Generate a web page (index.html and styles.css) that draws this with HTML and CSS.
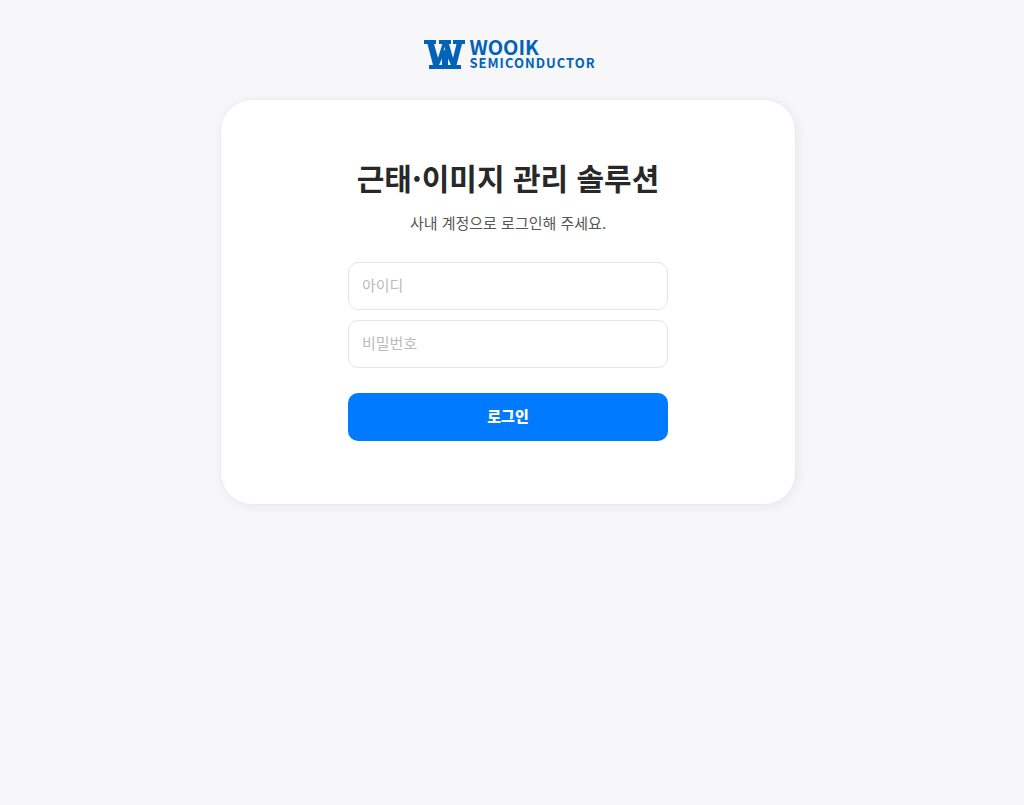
FILE: index.html
```html
<!DOCTYPE html>
<html lang="ko">
	<head>
		<meta charset="utf-8">
		<meta name="viewport" content="width=device-width, initial-scale=1">
		<title>근태·이미지 관리 솔루션</title>
		<link rel="stylesheet" href="styles.css">
	</head>

	<body>

		<header class="logo">
			<svg class="logo-mark" viewBox="0 0 41 29" aria-hidden="true">
				<path d="M0 0H12V4H10L14 18L18.300 4H15V0H27V4H25L29 18L32.500 4H29V0H41V4H38L32.500 25H37V29H5V25H9L3.500 4H0Z"/>
				<path class="logo-cut" d="M20.500 7L21.500 11L20.500 9.500L19.500 11ZM15 25L18 18.500V25ZM24 18.500L27 25H24Z"/>
			</svg>
			<div class="logo-text">
				<span class="logo-name">WOOIK</span>
				<span class="logo-sub">SEMICONDUCTOR</span>
			</div>
		</header>

		<main class="card">
			<h1>근태·이미지 관리 솔루션</h1>
			<p>사내 계정으로 로그인해 주세요.</p>

			<form class="login">
				<input type="text" name="id" placeholder="아이디" aria-label="아이디">
				<input type="password" name="password" placeholder="비밀번호" aria-label="비밀번호">
				<button type="submit">로그인</button>
			</form>
		</main>

	</body>
</html>
```

FILE: styles.css
```css
*{
	box-sizing: border-box;
}
body{
	margin: 0;
	padding: 39px 24px 40px 16px;
	background-color: #f7f7fa;
	color: #282828;
	font-family: "Noto Sans CJK KR", sans-serif;
}
.logo{
	display: flex;
	justify-content: center;
	gap: 4px;
	height: 30px;
	margin-bottom: 30px;
	padding-left: 4px;
	color: #0062b8;
}
.logo-mark{
	width: 41px;
	height: 29px;
	margin-top: 1px;
	fill: currentColor;
}
.logo-mark .logo-cut{
	fill: #f7f7fa;
}
.logo-text{
	display: flex;
	flex-direction: column;
	font-weight: 700;
}
.logo-name{
	font-size: 20px;
	line-height: 16px;
}
.logo-sub{
	font-size: 13px;
	letter-spacing: 1px;
	line-height: 16px;
}
.card{
	max-width: 576px;
	margin: 0 auto;
	padding: 54px 24px 63px;
	border: 1px solid #ebebef;
	border-radius: 32px;
	background-color: #fff;
	box-shadow: 2px 2px 12px rgba(0, 0, 40, 0.06);
	text-align: center;
}
.card h1{
	margin: 0;
	font-size: 30px;
	font-weight: 700;
	line-height: 46px;
}
.card p{
	margin: 11px 0 27px;
	color: #555;
	font-size: 15px;
	line-height: 24px;
}
.login{
	display: flex;
	flex-direction: column;
	gap: 10px;
	max-width: 320px;
	margin: 0 auto;
}
.login input,
.login button{
	width: 100%;
	height: 48px;
	border-radius: 10px;
	font-family: inherit;
	font-size: 15px;
}
.login input{
	padding: 0 13px 3px;
	border: 1px solid #e5e5e5;
	background-color: #fff;
	color: #282828;
}
.login input::placeholder{
	color: #bbb;
}
.login button{
	margin-top: 15px;
	padding: 0 0 3px;
	border: 0;
	background-color: #007aff;
	color: #fff;
	font-weight: 900;
	cursor: pointer;
}
```
